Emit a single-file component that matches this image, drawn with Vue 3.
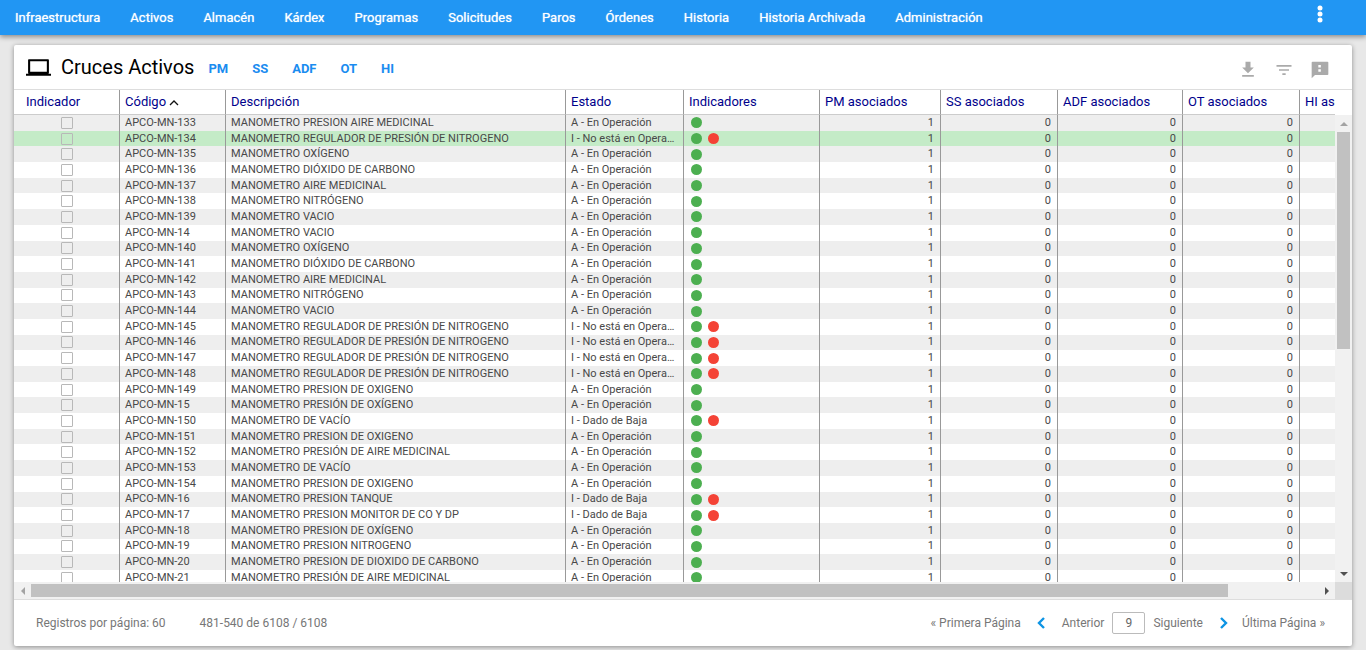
<script setup>
import { ref, computed } from "vue";

const menu = [
    "Infraestructura",
    "Activos",
    "Almacén",
    "Kárdex",
    "Programas",
    "Solicitudes",
    "Paros",
    "Órdenes",
    "Historia",
    "Historia Archivada",
    "Administración",
];

const crosses = ["PM", "SS", "ADF", "OT", "HI"];

const columns = [
    { key: "check", label: "Indicador" },
    { key: "code", label: "Código" },
    { key: "description", label: "Descripción" },
    { key: "status", label: "Estado" },
    { key: "lights", label: "Indicadores" },
    { key: "pm", label: "PM asociados" },
    { key: "ss", label: "SS asociados" },
    { key: "adf", label: "ADF asociados" },
    { key: "ot", label: "OT asociados" },
    { key: "hi", label: "HI asociados" },
];

const states = {
    A: "A - En Operación",
    I: "I - No está en Operación",
    B: "I - Dado de Baja",
};

const assets = [
    ["133", "MANOMETRO PRESION AIRE MEDICINAL", "A"],
    ["134", "MANOMETRO REGULADOR DE PRESIÓN DE NITROGENO", "I"],
    ["135", "MANOMETRO OXÍGENO", "A"],
    ["136", "MANOMETRO DIÓXIDO DE CARBONO", "A"],
    ["137", "MANOMETRO AIRE MEDICINAL", "A"],
    ["138", "MANOMETRO NITRÓGENO", "A"],
    ["139", "MANOMETRO VACIO", "A"],
    ["14", "MANOMETRO VACIO", "A"],
    ["140", "MANOMETRO OXÍGENO", "A"],
    ["141", "MANOMETRO DIÓXIDO DE CARBONO", "A"],
    ["142", "MANOMETRO AIRE MEDICINAL", "A"],
    ["143", "MANOMETRO NITRÓGENO", "A"],
    ["144", "MANOMETRO VACIO", "A"],
    ["145", "MANOMETRO REGULADOR DE PRESIÓN DE NITROGENO", "I"],
    ["146", "MANOMETRO REGULADOR DE PRESIÓN DE NITROGENO", "I"],
    ["147", "MANOMETRO REGULADOR DE PRESIÓN DE NITROGENO", "I"],
    ["148", "MANOMETRO REGULADOR DE PRESIÓN DE NITROGENO", "I"],
    ["149", "MANOMETRO PRESION DE OXIGENO", "A"],
    ["15", "MANOMETRO PRESIÓN DE OXÍGENO", "A"],
    ["150", "MANOMETRO DE VACÍO", "B"],
    ["151", "MANOMETRO PRESION DE OXIGENO", "A"],
    ["152", "MANOMETRO PRESIÓN DE AIRE MEDICINAL", "A"],
    ["153", "MANOMETRO DE VACÍO", "A"],
    ["154", "MANOMETRO PRESION DE OXIGENO", "A"],
    ["16", "MANOMETRO PRESION TANQUE", "B"],
    ["17", "MANOMETRO PRESION MONITOR DE CO Y DP", "B"],
    ["18", "MANOMETRO PRESION DE OXÍGENO", "A"],
    ["19", "MANOMETRO PRESION NITROGENO", "A"],
    ["20", "MANOMETRO PRESION DE DIOXIDO DE CARBONO", "A"],
    ["21", "MANOMETRO PRESIÓN DE AIRE MEDICINAL", "A"],
];

const rows = computed(() =>
    assets.map(([number, description, state]) => ({
        code: `APCO-MN-${number}`,
        description,
        status: states[state],
        stopped: state !== "A",
        counts: [1, 0, 0, 0],
    }))
);

const selected = ref("APCO-MN-134");
const checked = ref([]);
const page = ref("9");
</script>

<template>
    <div class="screen">
        <nav class="navbar">
            <a v-for="item in menu" :key="item" href="#" class="nav-link">{{ item }}</a>
            <button type="button" class="nav-more" aria-label="Más opciones">
                <svg width="24" height="24" viewBox="0 0 24 24" fill="currentColor">
                    <circle cx="12" cy="6" r="2.5" />
                    <circle cx="12" cy="12" r="2.5" />
                    <circle cx="12" cy="18" r="2.5" />
                </svg>
            </button>
        </nav>

        <main class="content">
            <section class="card">
                <header class="card-header">
                    <svg class="laptop" width="25" height="25" viewBox="0 0 24 24">
                        <path
                            d="M21 18c.6 0 1-.5 1-1V5c0-.6-.4-1-1-1H3c-.6 0-1 .4-1 1v12c0 .5.4 1 1 1H0v2h24v-2h-3zM4 6h16v10H4V6z"
                        />
                    </svg>
                    <h1 class="title">Cruces Activos</h1>
                    <div class="crosses">
                        <a v-for="cross in crosses" :key="cross" href="#" class="cross">{{ cross }}</a>
                    </div>
                    <div class="tools">
                        <button type="button" class="tool" aria-label="Descargar">
                            <svg width="20" height="20" viewBox="0 0 24 24" fill="currentColor">
                                <path d="M19 9h-4V2H9v7H5l7 7 7-7zM5 18v2h14v-2H5z" />
                            </svg>
                        </button>
                        <button type="button" class="tool" aria-label="Filtrar">
                            <svg width="20" height="20" viewBox="0 0 24 24" fill="currentColor">
                                <path d="M10 18h4v-2h-4v2zM3 6v2h18V6H3zm3 7h12v-2H6v2z" />
                            </svg>
                        </button>
                        <button type="button" class="tool" aria-label="Comentarios">
                            <svg width="20" height="20" viewBox="0 0 24 24" fill="currentColor">
                                <path
                                    d="M21 2H3c-.6 0-1 .4-1 1v19l4-4h15c.6 0 1-.4 1-1V3c0-.6-.4-1-1-1zm-8 12h-3v-3h3v3zm0-5h-3V6h3v3z"
                                />
                            </svg>
                        </button>
                    </div>
                </header>

                <div class="grid">
                    <div class="viewport">
                        <table class="table">
                            <colgroup>
                                <col v-for="col in columns" :key="col.key" :class="'col-' + col.key" />
                            </colgroup>
                            <thead>
                                <tr>
                                    <th v-for="col in columns" :key="col.key" scope="col">
                                        {{ col.label }}
                                        <svg
                                            v-if="col.key === 'code'"
                                            class="sort"
                                            width="10"
                                            height="6"
                                            viewBox="0 0 10 6"
                                        >
                                            <path d="M1 5l4-4 4 4" />
                                        </svg>
                                    </th>
                                </tr>
                            </thead>
                            <tbody>
                                <tr
                                    v-for="row in rows"
                                    :key="row.code"
                                    :class="{ selected: row.code === selected }"
                                    @click="selected = row.code"
                                >
                                    <td class="check-cell">
                                        <input
                                            v-model="checked"
                                            type="checkbox"
                                            class="check"
                                            :value="row.code"
                                            :aria-label="row.code"
                                        />
                                    </td>
                                    <td>{{ row.code }}</td>
                                    <td>{{ row.description }}</td>
                                    <td>{{ row.status }}</td>
                                    <td>
                                        <div class="lights">
                                            <span class="light green"></span>
                                            <span v-if="row.stopped" class="light red"></span>
                                        </div>
                                    </td>
                                    <td v-for="(count, i) in row.counts" :key="i" class="number">
                                        {{ count }}
                                    </td>
                                    <td></td>
                                </tr>
                            </tbody>
                        </table>
                    </div>
                    <div class="vbar">
                        <span class="arrow up"></span>
                        <div class="track">
                            <div class="thumb"></div>
                        </div>
                        <span class="arrow down"></span>
                    </div>
                    <div class="hbar">
                        <span class="arrow left"></span>
                        <div class="track">
                            <div class="thumb"></div>
                        </div>
                        <span class="arrow right"></span>
                    </div>
                    <div class="corner"></div>
                </div>

                <footer class="card-footer">
                    <span>Registros por página: 60</span>
                    <span>481-540 de 6108 / 6108</span>
                    <div class="pager">
                        <a href="#" class="page-link">« Primera Página</a>
                        <a href="#" class="page-link step">
                            <svg class="chevron" width="9" height="14" viewBox="0 0 9 14">
                                <path d="M7 2L2 7l5 5" />
                            </svg>
                            Anterior
                        </a>
                        <input v-model="page" type="text" class="page-input" aria-label="Página" />
                        <a href="#" class="page-link step">
                            Siguiente
                            <svg class="chevron" width="9" height="14" viewBox="0 0 9 14">
                                <path d="M2 2l5 5-5 5" />
                            </svg>
                        </a>
                        <a href="#" class="page-link">Última Página »</a>
                    </div>
                </footer>
            </section>
        </main>
    </div>
</template>

<style>
body {
    background: #e8e8e8;
}
</style>

<style scoped>
.screen {
    display: flex;
    flex-direction: column;
    height: 100vh;
    font-family: Roboto, "Liberation Sans", sans-serif;
    font-size: 12px;
    color: #484848;
}

a {
    color: inherit;
    text-decoration: none;
}

button {
    padding: 0;
    border: none;
    background: none;
    color: inherit;
    cursor: pointer;
}

svg {
    display: block;
}

.navbar {
    display: flex;
    align-items: center;
    gap: 30px;
    flex: none;
    height: 35px;
    padding: 0 34px 0 15px;
    background: #2196f3;
    box-shadow: 0 2px 5px rgba(0, 0, 0, 0.4);
    color: #fff;
}

.nav-link {
    font-size: 13px;
    font-weight: 400;
    text-shadow: 0 0 1px rgba(255, 255, 255, 0.8);
    white-space: nowrap;
}

.nav-more {
    align-self: flex-start;
    margin-left: auto;
    padding-top: 2px;
}

.content {
    display: flex;
    flex: 1;
    min-height: 0;
    padding: 10px 14px 4px;
}

.card {
    display: flex;
    flex-direction: column;
    flex: 1;
    min-width: 0;
    border-radius: 2px;
    background: #fff;
    box-shadow: 0 1px 5px rgba(0, 0, 0, 0.4);
}

.card-header {
    display: flex;
    align-items: center;
    flex: none;
    height: 44px;
    padding: 0 22px 0 12px;
    border-bottom: 1px solid #ddd;
}

.title {
    margin: 0 14px 0 10px;
    font-size: 20px;
    font-weight: 400;
    color: #000;
    white-space: nowrap;
}

.crosses {
    display: flex;
    gap: 24px;
    padding-top: 2px;
    color: #1a8cf0;
    font-size: 13px;
    font-weight: 700;
}

.tools {
    display: flex;
    gap: 16px;
    margin-left: auto;
    padding-top: 6px;
    color: #aaa;
}

.grid {
    display: grid;
    grid-template-columns: minmax(0, 1fr) 17px;
    grid-template-rows: minmax(0, 1fr) 17px;
    flex: 1;
    min-height: 0;
}

.viewport {
    overflow: hidden;
}

.table {
    width: 1403px;
    border-collapse: separate;
    border-spacing: 0;
    table-layout: fixed;
}

.col-check,
.col-code {
    width: 106px;
}

.col-description {
    width: 340px;
}

.col-status {
    width: 118px;
}

.col-lights {
    width: 136px;
}

.col-pm {
    width: 121px;
}

.col-adf {
    width: 125px;
}

.col-ss,
.col-ot,
.col-hi {
    width: 117px;
}

th {
    height: 22px;
    padding: 0 5px 2px;
    border-right: 1px solid #999;
    border-bottom: 1px solid #ccc;
    color: #00008b;
    font-size: 13px;
    font-weight: 400;
    text-align: left;
    white-space: nowrap;
}

th:first-child {
    padding-left: 12px;
}

.sort {
    display: inline-block;
    fill: none;
    stroke: #111;
    stroke-width: 1.3;
}

tbody {
    height: 471px;
}

tbody tr:nth-child(odd) {
    background: #eee;
}

tbody tr.selected {
    background: #c4ebc7;
}

td {
    overflow: hidden;
    padding: 0 6px 0 5px;
    border-right: 1px solid #999;
    font-size: 11px;
    line-height: 14px;
    text-overflow: ellipsis;
    white-space: nowrap;
}

.number {
    text-align: right;
}

.check-cell {
    padding: 0 5px;
}

.check {
    display: block;
    width: 12px;
    height: 12px;
    margin: 0 auto;
    border: 1px solid #b8b8b8;
    border-radius: 1px;
    appearance: none;
}

.check:checked {
    background: #2196f3;
}

.lights {
    display: flex;
    gap: 6px;
    padding-left: 2px;
}

.light {
    width: 11px;
    height: 11px;
    border-radius: 50%;
}

.green {
    background: #4caf50;
}

.red {
    background: #f44336;
}

.vbar {
    display: flex;
    flex-direction: column;
    margin-top: 25px;
    background: #f1f1f1;
}

.hbar {
    display: flex;
    background: #f1f1f1;
}

.track {
    flex: 1;
}

.thumb {
    background: #c1c1c1;
}

.vbar .thumb {
    width: 13px;
    height: 50%;
    margin: 0 auto;
}

.hbar .thumb {
    width: 93%;
    height: 13px;
    margin: 2px 0;
}

.corner {
    background: #dcdcdc;
}

.arrow {
    display: flex;
    align-items: center;
    justify-content: center;
    width: 17px;
    height: 17px;
}

.arrow::before {
    content: "";
    border: 4px solid transparent;
}

.up::before {
    border-top-width: 0;
    border-bottom-color: #a3a3a3;
}

.down::before {
    border-bottom-width: 0;
    border-top-color: #505050;
}

.left::before {
    border-left-width: 0;
    border-right-color: #a3a3a3;
}

.right::before {
    border-right-width: 0;
    border-left-color: #505050;
}

.card-footer {
    display: flex;
    align-items: center;
    gap: 34px;
    flex: none;
    height: 46px;
    padding: 0 27px 0 22px;
    border-top: 1px solid #ddd;
    color: #777;
    white-space: nowrap;
}

.pager {
    display: flex;
    align-items: center;
    gap: 8px;
    margin-left: auto;
}

.step {
    display: flex;
    align-items: center;
    gap: 16px;
    margin-left: 8px;
}

.page-input + .step {
    margin: 0 6px 0 0;
}

.chevron {
    fill: none;
    stroke: #0d94e4;
    stroke-width: 2.4;
}

.page-input {
    box-sizing: border-box;
    width: 33px;
    height: 22px;
    padding: 0;
    border: 1px solid #bbb;
    border-radius: 2px;
    color: #666;
    font: inherit;
    text-align: center;
}
</style>
